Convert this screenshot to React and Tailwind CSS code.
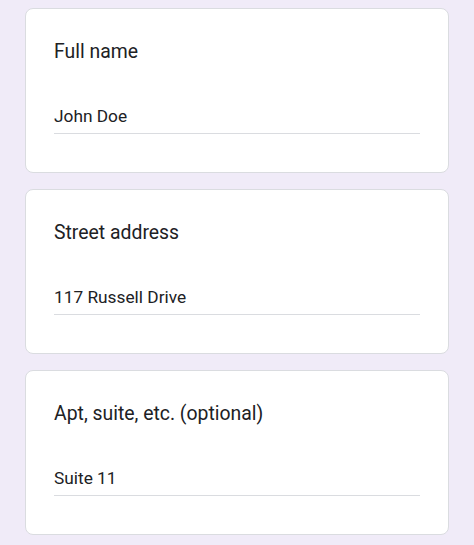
import React from 'react';

const fields = [
  { label: 'Full name', value: 'John Doe' },
  { label: 'Street address', value: '117 Russell Drive' },
  { label: 'Apt, suite, etc. (optional)', value: 'Suite 11' },
];

export default function App() {
  return (
    <div className="min-h-screen bg-[#f0ebf8] pt-2 pl-[25px] pr-[25px] font-['Roboto',sans-serif]">
      <div className="flex flex-col gap-4">
        {fields.map((f) => (
          <div
            key={f.label}
            className="bg-white border border-[#dadce0] rounded-lg px-7 pt-[31px] pb-[38px]"
          >
            <div className="text-[19.4px] leading-6 text-[#202124]">{f.label}</div>
            <div className="mt-10 text-[17.3px] leading-6 text-[#202124] pb-[5px] border-b border-[#dadce0]">
              {f.value}
            </div>
          </div>
        ))}
      </div>
    </div>
  );
}
